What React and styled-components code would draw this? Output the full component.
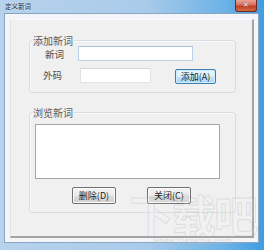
import React from "react";
import styled, { createGlobalStyle } from "styled-components";

const GlobalStyle = createGlobalStyle`
  html, body {
    margin: 0;
    padding: 0;
    background: #6fb3e6;
  }
  body {
    font-family: "Noto Sans CJK SC", "Liberation Sans", sans-serif;
  }
`;

const Window = styled.div`
  position: relative;
  width: 264px;
  height: 250px;
  box-sizing: border-box;
  display: flex;
  flex-direction: column;
  padding: 0 5px 7px 4px;
  overflow: hidden;
  background: linear-gradient(to right, #b7d2ec 0%, #a9cbea 55%, #6cb2e6 85%, #3d9ee0 100%);
`;

const TitleBar = styled.div`
  height: 13px;
  display: flex;
  align-items: flex-start;
  justify-content: space-between;
  padding-left: 1px;
`;

const Title = styled.span`
  margin-top: 3px;
  font-size: 6.5px;
  line-height: 7px;
  color: #1b2a3a;
  text-shadow: 0 0 2px #eef6ff;
`;

const CloseButton = styled.div`
  width: 22px;
  height: 12px;
  margin-right: 2px;
  box-sizing: border-box;
  border: 1px solid #6e2b23;
  border-top: none;
  border-radius: 0 0 3px 3px;
  background: linear-gradient(#e8a493 0%, #d7705e 45%, #c23e23 55%, #d56a45 100%);
  display: flex;
  align-items: center;
  justify-content: center;
  color: #fff;
  font-family: "DejaVu Sans", sans-serif;
  font-size: 7px;
  font-weight: bold;
  line-height: 1;
  text-shadow: 0 0 1px #5a1a10;
`;

const Client = styled.div`
  flex: 1;
  border: 1px solid #8aa6c4;
  background: #f3f5f8;
  padding: 5px 0 0 5px;
`;

const Panel = styled.div`
  width: 244px;
  height: 219px;
  box-sizing: border-box;
  background: #f0f0f0;
  border-top: 1px solid #fbfbfb;
  border-left: 1px solid #e2e2e2;
  border-right: 2px solid #a3a3a3;
  border-bottom: 2px solid #a3a3a3;
  padding: 20px 0 0 18px;
  display: flex;
  flex-direction: column;
  gap: 19px;
`;

const GroupBox = styled.div`
  position: relative;
  width: 207px;
  height: ${(p) => p.$height}px;
  box-sizing: border-box;
  border: 1px solid #d8dde2;
  border-radius: 3px;
  box-shadow: inset 1px 1px 0 #fafafa;
`;

const Legend = styled.span`
  position: absolute;
  top: -6px;
  left: 2px;
  padding: 0 1px;
  background: #f0f0f0;
  font-size: 10px;
  line-height: 11px;
  color: #5a5a5a;
`;

const FormRow = styled.div`
  display: flex;
  align-items: center;
  padding-left: ${(p) => p.$indent}px;
  margin-top: ${(p) => p.$top}px;
`;

const Label = styled.span`
  width: ${(p) => p.$width}px;
  font-size: 9.5px;
  line-height: 10px;
  color: #4a4a4a;
`;

const TextInput = styled.div`
  width: ${(p) => p.$width}px;
  height: 15px;
  box-sizing: border-box;
  background: #fff;
  border: 1px solid ${(p) => (p.$focus ? "#b9d2ea" : "#e1e3e8")};
  border-top-color: ${(p) => (p.$focus ? "#a7c3e0" : "#d4d7dd")};
`;

const Button = styled.div`
  width: ${(p) => p.$width}px;
  height: ${(p) => p.$height}px;
  box-sizing: border-box;
  margin-left: ${(p) => p.$left || 0}px;
  align-self: ${(p) => (p.$drop ? "flex-start" : "auto")};
  margin-top: ${(p) => p.$drop || 0}px;
  display: flex;
  align-items: center;
  justify-content: center;
  border-radius: 2px;
  font-size: 9px;
  line-height: 1;
  color: #222;
  border: 1px solid ${(p) => (p.$default ? "#3c7fb1" : "#707070")};
  background: ${(p) =>
    p.$default
      ? "linear-gradient(#eaf6fd 0%, #d9f0fc 50%, #bee6fd 51%, #a7d9f5 100%)"
      : "linear-gradient(#f2f2f2 0%, #ebebeb 50%, #dddddd 51%, #cfcfcf 100%)"};
  box-shadow: inset 0 0 0 1px ${(p) => (p.$default ? "#cfeefc" : "#fbfbfb")};
`;

const ListBox = styled.div`
  width: 185px;
  height: 55px;
  box-sizing: border-box;
  margin: 11px 0 0 5px;
  background: #fff;
  border: 1px solid #a6a6a6;
`;

const ButtonRow = styled.div`
  display: flex;
  gap: 31px;
  padding-left: 42px;
  margin-top: 8px;
`;

const Watermark = styled.div`
  position: absolute;
  right: 8px;
  bottom: 4px;
  display: flex;
  flex-direction: column;
  align-items: center;
  pointer-events: none;
`;

const WatermarkLogo = styled.span`
  font-size: 44px;
  line-height: 40px;
  font-weight: bold;
  letter-spacing: -2px;
  color: rgba(255, 255, 255, 0.12);
  -webkit-text-stroke: 1px rgba(150, 150, 150, 0.22);
`;

const WatermarkUrl = styled.span`
  margin-top: 2px;
  font-family: "Liberation Sans", sans-serif;
  font-size: 9px;
  line-height: 10px;
  font-weight: bold;
  color: rgba(255, 255, 255, 0.2);
  -webkit-text-stroke: 0.5px rgba(150, 150, 150, 0.28);
`;

export default function App() {
  return (
    <>
      <GlobalStyle />
      <Window>
        <TitleBar>
          <Title>定义新词</Title>
          <CloseButton>✕</CloseButton>
        </TitleBar>
        <Client>
          <Panel>
            <GroupBox $height={53}>
              <Legend>添加新词</Legend>
              <FormRow $indent={15} $top={5}>
                <Label $width={33}>新词</Label>
                <TextInput $width={115} $focus />
              </FormRow>
              <FormRow $indent={13} $top={5}>
                <Label $width={37}>外码</Label>
                <TextInput $width={71} />
                <Button $default $width={41} $height={15} $left={24} $drop={3}>
                  添加(A)
                </Button>
              </FormRow>
            </GroupBox>
            <GroupBox $height={101}>
              <Legend>浏览新词</Legend>
              <ListBox />
              <ButtonRow>
                <Button $width={44} $height={17}>删除(D)</Button>
                <Button $width={44} $height={17}>关闭(C)</Button>
              </ButtonRow>
            </GroupBox>
          </Panel>
        </Client>
        <Watermark>
          <WatermarkLogo>下载吧</WatermarkLogo>
          <WatermarkUrl>www.xiazaiba.com</WatermarkUrl>
        </Watermark>
      </Window>
    </>
  );
}
